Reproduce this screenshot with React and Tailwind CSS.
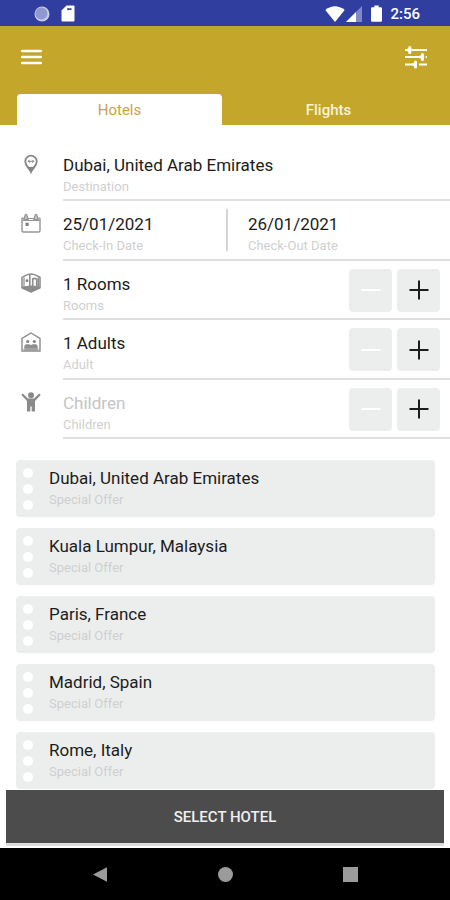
import React, { useState } from 'react'

const OFFERS = [
  'Dubai, United Arab Emirates',
  'Kuala Lumpur, Malaysia',
  'Paris, France',
  'Madrid, Spain',
  'Rome, Italy',
]

// ── Icons ────────────────────────────────────────────────────────────────

function PinIcon() {
  return (
    <svg viewBox="0 0 20 20" className="size-5" fill="none" stroke="#858585" strokeWidth="1.800">
      <path d="M10 18C8.800 15 4.300 12 4.300 7.300a5.700 5.700 0 0 1 11.400 0C15.700 12 11.200 15 10 18z" />
      <path d="M6 12 10 18.500l4-6.500q-4 2-8 0z" fill="#858585" stroke="none" />
      <path d="M7 7.300h6M11.300 5.800l1.500 1.500-1.500 1.500M8.700 5.800 7.200 7.300l1.500 1.500" strokeWidth="1" />
    </svg>
  )
}

function CalendarIcon() {
  return (
    <svg viewBox="0 0 20 20" className="size-5" fill="none" stroke="#959595" strokeWidth="1.400">
      <path d="M2.500 5H2Q1 5 1 6v11.500Q1 19 2.500 19h15q1.500 0 1.500-1.500V6q0-1-1-1h-.5" />
      <path d="M6.500 5.500h7M1.500 7.500h17" strokeWidth="1.200" />
      <path d="M2.800 6.500 4.200 2q.8-1.300 1.600 0l1.400 4.500zM12.800 6.500 14.200 2q.8-1.300 1.600 0l1.400 4.500z" fill="#c4c4c4" strokeWidth="1.200" />
      <rect x="4.500" y="9.700" width="3.200" height="3.200" fill="#7d7d7d" stroke="none" />
    </svg>
  )
}

function RoomsIcon() {
  return (
    <svg viewBox="0 0 20 20" className="size-5" fill="none" stroke="#8c8c8c" strokeWidth="1.500">
      <path d="M1 4.300 6.500 1.600Q10 .6 13.500 1.600L19 4.300v10.400L10 19l-9-4.300z" />
      <path d="M1 14.200 8.500 13h3l7.500 1.200v.8L10 19l-9-4z" fill="#8c8c8c" strokeWidth="1" />
      <path d="M8.800 1.500v12" strokeWidth="1.600" />
      <path d="M3 4.500v9" strokeWidth="1.200" />
      <path d="M11.700 13.500V6q2-1.300 4 .3v8" strokeWidth="1.600" />
      <path d="M17.300 4.500v10" strokeWidth="1.600" />
      <circle cx="6" cy="7.700" r="1.400" fill="#7d7d7d" stroke="none" />
    </svg>
  )
}

function AdultsIcon() {
  return (
    <svg viewBox="0 0 20 20" className="size-5" fill="none" stroke="#8c8c8c" strokeWidth="1.400">
      <path d="M1 19V6.500L10 1l9 5.500V19z" />
      <circle cx="6.700" cy="9.500" r="1.600" fill="#858585" stroke="none" />
      <circle cx="13.300" cy="9.500" r="1.600" fill="#858585" stroke="none" />
      <path d="M3.300 18.500v-4q0-2.300 2.300-2.300h2.200q1.400 0 2.200 1.100.8-1.100 2.200-1.100h2.200q2.300 0 2.300 2.300v4z" fill="#8f8f8f" stroke="none" />
      <path d="M1.800 17h16.400" stroke="#b5b5b5" strokeWidth="1" />
    </svg>
  )
}

function ChildIcon() {
  return (
    <svg viewBox="0 0 20 20" className="size-5" fill="#8a8a8a">
      <circle cx="10" cy="3.300" r="3" />
      <path d="M1.800 1.500.3 3l5.700 6V19.500h3.300v-5h1.400v5H14V9l5.700-6-1.500-1.500-5.200 5H7z" />
    </svg>
  )
}

function TuneIcon() {
  return (
    <svg viewBox="0 0 24 24" className="size-6" fill="none" stroke="#fff" strokeWidth="2.200">
      <path d="M1 5h3M8 5h15M1 12h15M21.500 12H23M1 19.500h8M15 19.500h8" />
      <path d="M5.800 2.500v5M18.500 9.500v5M11.500 17v5" strokeWidth="3" strokeLinecap="round" />
      <path d="M3.500 5h4M15.500 12h4M8.500 19.500h4" strokeWidth="3" />
    </svg>
  )
}

// ── Pieces ───────────────────────────────────────────────────────────────

function StatusBar() {
  return (
    <div className="flex h-[26px] shrink-0 items-center bg-[#303f9f] pt-px pr-[30px] pl-[34px] text-white">
      <svg viewBox="0 0 16 16" className="size-4">
        <circle cx="8" cy="8" r="7.500" fill="#c5cbec" />
        <circle cx="7.400" cy="7.400" r="6" fill="#8f99cf" />
      </svg>
      <svg viewBox="0 0 14 17" className="ml-[11px] h-[17px] w-[14px]">
        <path d="M5.500.5H12.500Q13.500.5 13.500 1.500V15.500q0 1-1 1H1.500q-1 0-1-1V5.500z" fill="#fff" />
        <path d="M6 3.200h4.500v2L8.500 4.700l-2 .8z" fill="#303f9f" />
      </svg>
      <svg viewBox="0 0 20 16" className="ml-auto h-4 w-5">
        <path d="M10 16 .3 4Q10-3.500 19.700 4z" fill="#fff" />
      </svg>
      <svg viewBox="0 0 16 16" className="ml-px size-4">
        <path d="M0 16 16 0v16z" fill="#7f8ac9" />
        <path d="M0 16 10 6v10z" fill="#fff" />
      </svg>
      <svg viewBox="0 0 11 17" className="ml-[9px] h-[17px] w-[11px]">
        <path d="M3.300.5h4.400v1.700h2.100q1.200 0 1.200 1.200v12.100q0 1.200-1.200 1.200H1.200Q0 16.700 0 15.500V3.400q0-1.200 1.200-1.200h2.100z" fill="#fff" />
      </svg>
      <span className="ml-2 text-[15px] leading-5 font-medium">2:56</span>
    </div>
  )
}

function Row({ icon, children }) {
  return (
    <div className="flex pl-[21px]">
      <div className="w-[42px] shrink-0 pt-[12px]">{icon}</div>
      <div className="flex flex-1 border-b-2 border-[#e0e0e0]">{children}</div>
    </div>
  )
}

function Field({ id, label, value, onChange, placeholder }) {
  return (
    <div className="flex min-w-0 flex-1 flex-col-reverse justify-end pt-[12px]">
      <label htmlFor={id} className="text-[13px] leading-[22px] text-[#cfcfcf]">{label}</label>
      <input
        id={id}
        type="text"
        value={value}
        onChange={e => onChange(e.target.value)}
        placeholder={placeholder}
        className="w-full text-[17px] leading-[22px] text-[#1c1c1c] outline-none placeholder:text-[#c4c4c4]"
      />
    </div>
  )
}

function Counter({ id, label, unit, icon, count, setCount, min }) {
  return (
    <Row icon={icon}>
      <Field
        id={id}
        label={label}
        value={count > 0 ? `${count} ${unit}` : ''}
        placeholder={unit}
        onChange={v => setCount(parseInt(v, 10) || min)}
      />
      <div className="flex gap-[5px] pt-2 pr-[10px]">
        <button
          type="button"
          aria-label={`Less ${unit}`}
          disabled={count <= min}
          onClick={() => setCount(count - 1)}
          className="flex size-[43px] items-center justify-center rounded bg-[#eceeee] text-black disabled:text-white"
        >
          <svg viewBox="0 0 20 20" className="size-5" stroke="currentColor" strokeWidth="2"><path d="M.5 10h19" /></svg>
        </button>
        <button
          type="button"
          aria-label={`More ${unit}`}
          onClick={() => setCount(count + 1)}
          className="flex size-[43px] items-center justify-center rounded bg-[#eceeee] text-[#1c1c1c]"
        >
          <svg viewBox="0 0 20 20" className="size-5" stroke="currentColor" strokeWidth="2"><path d="M.5 10h19M10 .5v19" /></svg>
        </button>
      </div>
    </Row>
  )
}

function OfferCard({ city }) {
  return (
    <li>
      <button type="button" className="flex h-[57px] w-full rounded bg-[#eceeee] text-left">
        <span className="flex w-[33px] flex-col gap-[6px] pt-2 pl-[7px]">
          <span className="size-[10px] rounded-full bg-white" />
          <span className="size-[10px] rounded-full bg-white" />
          <span className="size-[10px] rounded-full bg-white" />
        </span>
        <span className="pt-[7px]">
          <span className="block text-[17px] leading-[22px] text-[#1c1c1c]">{city}</span>
          <span className="block text-[13px] leading-[22px] text-[#cfcfcf]">Special Offer</span>
        </span>
      </button>
    </li>
  )
}

export default function App() {
  const [tab, setTab] = useState('Hotels')
  const [destination, setDestination] = useState('Dubai, United Arab Emirates')
  const [checkIn, setCheckIn] = useState('25/01/2021')
  const [checkOut, setCheckOut] = useState('26/01/2021')
  const [rooms, setRooms] = useState(1)
  const [adults, setAdults] = useState(1)
  const [children, setChildren] = useState(0)

  return (
    <div className="flex h-screen flex-col bg-white font-[Roboto,sans-serif]">
      <StatusBar />

      {/* Header */}
      <header className="shrink-0 bg-[#c4a62a]">
        <div className="flex h-[68px] items-center justify-between pr-[22px] pb-[6px] pl-[21px]">
          <button type="button" aria-label="Menu">
            <svg viewBox="0 0 21 16" className="h-4 w-[21px]" stroke="#fff" strokeWidth="2.500" strokeLinecap="round">
              <path d="M1.200 2h18.600M1.200 8h18.600M1.200 14h18.600" />
            </svg>
          </button>
          <button type="button" aria-label="Filters"><TuneIcon /></button>
        </div>
        <nav className="grid grid-cols-2 gap-1 pr-[19px] pl-[17px]">
          {['Hotels', 'Flights'].map(t => (
            <button
              key={t}
              type="button"
              onClick={() => setTab(t)}
              className={
                tab === t
                  ? 'h-[31px] rounded-t bg-white pt-px text-[15px] leading-5 text-[#c9a444]'
                  : 'h-[31px] pt-px text-[15px] leading-5 font-medium text-[#f8f1d8]'
              }
            >
              {t}
            </button>
          ))}
        </nav>
      </header>

      <main className="min-h-0 flex-1 overflow-y-auto [scrollbar-width:none]">
        {/* Search form */}
        <form className="mt-[17px] grid min-h-[297px] auto-rows-fr">
          <Row icon={<PinIcon />}>
            <Field id="destination" label="Destination" value={destination} onChange={setDestination} />
          </Row>
          <Row icon={<CalendarIcon />}>
            <div className="grid flex-1 grid-cols-[8fr_11fr]">
              <Field id="check-in" label="Check-In Date" value={checkIn} onChange={setCheckIn} />
              <div className="flex">
                <div className="my-2 mr-5 w-[2px] bg-[#d6d6d6]" />
                <Field id="check-out" label="Check-Out Date" value={checkOut} onChange={setCheckOut} />
              </div>
            </div>
          </Row>
          <Counter id="rooms" label="Rooms" unit="Rooms" icon={<RoomsIcon />} count={rooms} setCount={setRooms} min={1} />
          <Counter id="adults" label="Adult" unit="Adults" icon={<AdultsIcon />} count={adults} setCount={setAdults} min={1} />
          <Counter id="children" label="Children" unit="Children" icon={<ChildIcon />} count={children} setCount={setChildren} min={0} />
        </form>

        {/* Offers */}
        <ul className="mt-[21px] mr-[15px] ml-4 flex flex-col gap-[11px] pb-4">
          {OFFERS.map(city => <OfferCard key={city} city={city} />)}
        </ul>
      </main>

      <div className="shrink-0 bg-white px-[6px] pt-px pb-[5px]">
        <button type="button" className="h-[53px] w-full bg-[#4c4c4c] text-[15px] leading-5 font-medium text-[#f0f0f0] shadow-[0_3px_0_#dcdcdc]">
          SELECT HOTEL
        </button>
      </div>

      {/* System navigation */}
      <div className="flex h-[52px] shrink-0 items-center justify-center gap-[110px] bg-black">
        <button type="button" aria-label="Back">
          <svg viewBox="0 0 15 15" className="size-[15px]" fill="#9b9b9b"><path d="M0 7.500 14 .3v14.400z" /></svg>
        </button>
        <button type="button" aria-label="Home" className="size-[15px] rounded-full bg-[#9b9b9b]" />
        <button type="button" aria-label="Recent apps" className="size-[15px] bg-[#9b9b9b]" />
      </div>
    </div>
  )
}
